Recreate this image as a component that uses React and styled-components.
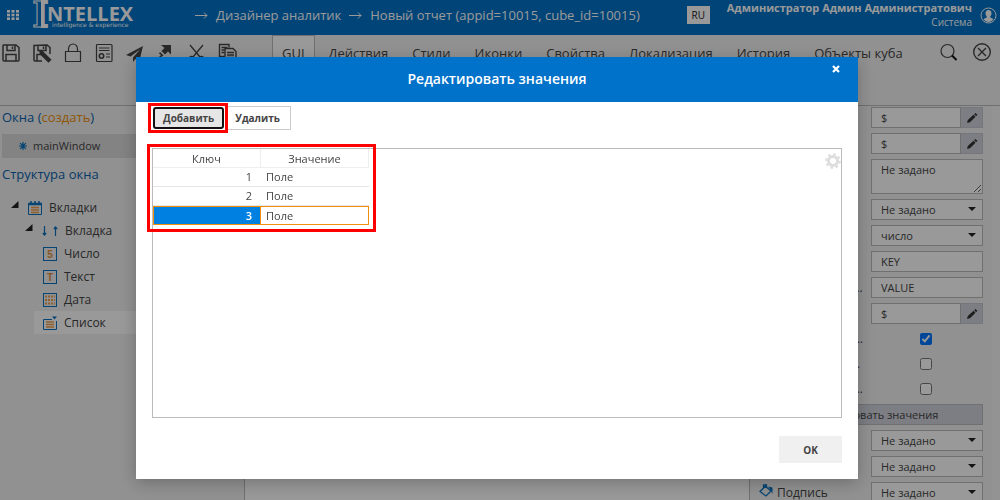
import React, { useState } from 'react';
import styled, { createGlobalStyle, css } from 'styled-components';

const GlobalStyle = createGlobalStyle`
  :root {
    --brand: #0072c9;
    --link: #0a62ad;
    --orange: #f0900a;
    --panel: #f2f2f2;
    --line: #bbb;
    --text: #444;
  }
  * {
    box-sizing: border-box;
  }
  body {
    margin: 0;
    overflow: hidden;
    background: #fff;
    color: var(--text);
    font: 12px/16px 'Open Sans', 'Noto Sans', sans-serif;
  }
  button, input, select, textarea {
    font: inherit;
    color: inherit;
    margin: 0;
  }
  a {
    color: inherit;
    text-decoration: none;
  }
`;

const Page = styled.div`
  display: flex;
  flex-direction: column;
  height: 100vh;
`;

/* ---------- header ---------- */

const HeaderBar = styled.header`
  flex: none;
  display: flex;
  align-items: center;
  height: 35px;
  padding: 0 3px 5px 7px;
  background: var(--brand);
  color: #fff;
`;

const IconButton = styled.button`
  display: flex;
  padding: 0;
  border: 0;
  background: none;
  cursor: pointer;
`;

const LogoLink = styled.a`
  display: flex;
  margin: 0 59px 0 14px;
`;

const Crumbs = styled.nav`
  flex: 1;
  display: flex;
  align-items: center;
  gap: 8px;
  font-size: 13px;
  white-space: nowrap;
`;

const Lang = styled.button`
  width: 23px;
  height: 18px;
  margin-right: 17px;
  padding: 0;
  border: 0;
  background: #fff;
  color: #222;
  font-size: 10px;
`;

const User = styled.div`
  margin-right: 8px;
  font-size: 10px;
  line-height: 14px;
  text-align: right;
  white-space: nowrap;
`;

const UserName = styled.strong`
  display: block;
  font-size: 11px;
`;

/* ---------- toolbar ---------- */

const Toolbar = styled.div`
  flex: none;
  display: flex;
  align-items: flex-start;
  height: 71px;
  padding-right: 8px;
  background: var(--panel);
  border-bottom: 1px solid var(--line);
  color: #444;
`;

const Tools = styled.div`
  flex: none;
  display: flex;
  gap: 11px;
  width: 272px;
  padding: 8px 0 0 1px;
`;

const Tabs = styled.div`
  flex: 1;
  display: flex;
  gap: 4px;
`;

const Tab = styled.button`
  height: 36px;
  padding: 0 9px;
  border: 1px solid ${(p) => (p.$active ? '#bbb' : 'transparent')};
  background: ${(p) => (p.$active ? '#fff' : 'none')};
  font-size: 13px;
  white-space: nowrap;
`;

const RightTools = styled.div`
  display: flex;
  gap: 14px;
  padding-top: 7px;
`;

/* ---------- sidebar ---------- */

const Main = styled.div`
  flex: 1;
  display: flex;
  min-height: 0;
`;

const Sidebar = styled.aside`
  flex: none;
  width: 245px;
  padding: 2px 0 0 2px;
  background: var(--panel);
  border-right: 1px solid var(--line);
`;

const SideTitle = styled.h2`
  margin: 0;
  color: var(--link);
  font-size: 13px;
  font-weight: 400;
  line-height: 18px;
`;

const Create = styled.a`
  color: var(--orange);
`;

const WindowItem = styled.div`
  display: flex;
  align-items: center;
  gap: 6px;
  height: 24px;
  margin: 8px 0 7px;
  padding-left: 17px;
  background: #dadada;
  font-size: 11px;
`;

const Tree = styled.ul`
  margin: 13px 0 0;
  padding: 0;
  list-style: none;
`;

const Node = styled.li`
  display: flex;
  align-items: center;
  gap: 7px;
  height: 23px;
  margin-left: ${(p) => p.$indent}px;
  padding-left: 9px;
  background: ${(p) => (p.$selected ? '#fff' : 'none')};
`;

const Canvas = styled.main`
  flex: 1;
  background: #fff;
`;

/* ---------- properties ---------- */

const Props = styled.aside`
  flex: none;
  width: 251px;
  padding-right: 8px;
  background: #f6f6f6;
  border-left: 1px solid var(--line);
`;

const PropList = styled.div`
  display: flex;
  flex-direction: column;
  gap: 5px;
  height: 100%;
  padding: 1px 9px 0;
  overflow: hidden;
  background: var(--panel);
`;

const PropRow = styled.div`
  flex: none;
  display: grid;
  grid-template-columns: 14px minmax(0, 1fr) 112px;
  column-gap: 4px;
  align-items: center;
  height: ${(p) => p.$height || 21}px;
`;

const PropLabel = styled.label`
  overflow: hidden;
  text-overflow: ellipsis;
  white-space: nowrap;
`;

const field = css`
  width: 100%;
  height: 100%;
  padding: 0 9px;
  border: 1px solid var(--line);
  border-radius: 0;
  background: #fff;
  font-size: 11px;
`;

const Input = styled.input`
  ${field}
`;

const Area = styled.textarea`
  ${field}
  display: block;
  padding-top: 2px;
`;

const SelectBox = styled.div`
  position: relative;
  height: 100%;
  &::after {
    content: '';
    position: absolute;
    top: 8px;
    right: 7px;
    border: 4px solid transparent;
    border-top-color: #222;
    border-bottom: 0;
    pointer-events: none;
  }
`;

const Select = styled.select`
  ${field}
  appearance: none;
`;

const Combo = styled.div`
  display: grid;
  grid-template-columns: 1fr 22px;
  height: 100%;
`;

const EditButton = styled.button`
  display: flex;
  align-items: center;
  justify-content: center;
  padding: 0;
  border: 1px solid #c4c6d0;
  border-left: 0;
  background: #d0d2dc;
`;

const Check = styled.input`
  width: 12px;
  height: 12px;
  justify-self: center;
  && {
    margin-right: 2px;
  }
`;

const WideButton = styled.button`
  flex: none;
  height: 21px;
  border: 1px solid var(--line);
  background: #d0d2dc;
  font-size: 11px;
`;

/* ---------- dialog ---------- */

const Backdrop = styled.div`
  position: fixed;
  inset: 0;
  padding: 57px 142px 0 136px;
  background: rgba(0, 0, 0, 0.4);
`;

const Dialog = styled.section`
  background: #fff;
  box-shadow: 0 4px 16px rgba(0, 0, 0, 0.25);
`;

const DialogHead = styled.div`
  display: grid;
  grid-template-columns: 40px 1fr 40px;
  height: 45px;
  background: var(--brand);
  color: #fff;
`;

const DialogTitle = styled.h1`
  grid-column: 2;
  margin: 0;
  font-size: 14px;
  font-weight: 600;
  line-height: 44px;
  text-align: center;
`;

const Close = styled(IconButton)`
  align-self: start;
  justify-self: center;
  padding: 8px 4px 8px 0;
`;

const DialogBody = styled.div`
  padding: 4px 16px 16px;
`;

const Actions = styled.div`
  display: flex;
  height: 24px;
`;

const Highlight = styled.div`
  position: relative;
  display: flex;
  &::before {
    content: '';
    position: absolute;
    inset: ${(p) => p.$inset};
    border: 3px solid #f00;
    pointer-events: none;
  }
`;

const ActionButton = styled.button`
  padding: 0 10px;
  border: 1px solid #ccc;
  border-left: 0;
  background: #fff;
  font-size: 10px;
  font-weight: 700;
  ${(p) =>
    p.$focused &&
    css`
      padding: 0 8px;
      margin: 1px;
      border: 2px solid #111;
      border-radius: 3px;
      background: #e6e6e6;
    `}
`;

const GridBox = styled.div`
  display: flex;
  justify-content: space-between;
  align-items: flex-start;
  height: 270px;
  margin: 18px 0;
  border: 1px solid var(--line);
`;

const Table = styled.table`
  width: 216px;
  table-layout: fixed;
  border-collapse: separate;
  border-spacing: 0;
  font-size: 11px;
  th {
    height: 19px;
    padding: 2px 0 0;
    border-right: 1px solid #eee;
    border-bottom: 1px solid #eee;
    font-weight: 400;
  }
  td {
    height: 19px;
    padding: 0 5px;
    border-bottom: 1px solid #e6e6e6;
    line-height: 16px;
  }
  td:first-child {
    padding-right: 9px;
    text-align: right;
  }
`;

const Row = styled.tr`
  ${(p) =>
    p.$selected &&
    css`
      && td {
        padding-left: 5px;
        border: 1px solid var(--orange);
        border-left: 0;
      }
      && td:first-child {
        padding-right: 8px;
        border-left: 1px solid var(--orange);
        background: #0080e0;
        color: #fff;
        font-weight: 600;
      }
    `}
`;

const Footer = styled.div`
  display: flex;
  justify-content: flex-end;
`;

const OkButton = styled.button`
  width: 63px;
  height: 27px;
  padding: 0;
  border: 0;
  background: #f0f0f0;
  font-size: 10px;
  font-weight: 700;
`;

/* ---------- drawings ---------- */

const Svg = ({ w = 20, h = 20, children, ...rest }) => (
  <svg width={w} height={h} viewBox={`0 0 ${w} ${h}`} fill="none" stroke="currentColor" strokeWidth="1.5" aria-hidden="true" {...rest}>
    {children}
  </svg>
);

const Logo = () => (
  <svg width="103" height="30" viewBox="0 0 103 30" fill="#fff" role="img" aria-label="Intellex">
    <clipPath id="solid">
      <rect x="8" y="0" width="12" height="30" />
    </clipPath>
    <text x="-1" y="27" fontFamily="DejaVu Serif" fontWeight="700" fontSize="35" fill="none" stroke="#fff">I</text>
    <text x="-1" y="27" fontFamily="DejaVu Serif" fontWeight="700" fontSize="35" stroke="#fff" strokeWidth="2" clipPath="url(#solid)">I</text>
    <text x="14" y="21" fontFamily="Open Sans" fontWeight="700" fontSize="20">NTELLEX</text>
    <text x="19" y="27" fontFamily="DejaVu Sans" fontSize="6">intelligence &amp; experience</text>
  </svg>
);

const Arrow = () => (
  <Svg w={13} h={8} strokeWidth="1">
    <path d="M0 4.500h12M9 1.500l3 3-3 3" />
  </Svg>
);

const AppsIcon = () => (
  <Svg w={12} h={10} fill="#fff" stroke="none">
    {[0, 4.5, 9].map((x) => [0, 3.7, 7.4].map((y) => <rect key={`${x}-${y}`} x={x} y={y} width="3" height="2.600" />))}
  </Svg>
);

const AvatarIcon = () => (
  <Svg w={17} h={17} strokeWidth="1" stroke="#fff">
    <circle cx="8.5" cy="8.5" r="7.5" />
    <path d="M8.5 3c2 0 3 1.400 3 3.400 0 1.300-.6 2.200-1.200 2.900v1.200l3.200 1.500c-1.200 2-3 3-5 3s-3.800-1-5-3l3.200-1.500V9.300C6.100 8.600 5.500 7.700 5.500 6.400 5.500 4.400 6.500 3 8.500 3z" fill="#fff" stroke="none" />
  </Svg>
);

const floppy = 'M2.500 2H15l3 2.500V17a1 1 0 0 1-1 1H3a1 1 0 0 1-1-1V2.500zM6 2v5.500h8V2M11.500 3.500v2.500M5 18v-6.500h10V18';

const SaveIcon = () => (
  <Svg>
    <path d={floppy} />
  </Svg>
);

const SaveEditIcon = () => (
  <Svg>
    <path d="M10 18H3a1 1 0 0 1-1-1V2.500L15 2l3 2.500V11M6 2v5.500h8V2M11.500 3.500v2.500M5 18v-6.500h4" />
    <path d="M8 8l2.500.8 8 8-2 2-8-8z" fill="currentColor" />
  </Svg>
);

const LockIcon = () => (
  <Svg strokeWidth="1.200">
    <path d="M2.500 8.500h15v10h-15zM5.500 8.500V6a4.500 5 0 0 1 9 0v2.500" />
  </Svg>
);

const FormIcon = () => (
  <Svg strokeWidth="1.200">
    <rect x="2.500" y="1.500" width="15.500" height="17" rx="1" />
    <path d="M5 5h10.500M5 7.500h10.500M12 11h4M12 14h4" />
    <circle cx="7.500" cy="13" r="2.200" strokeWidth="1.600" />
  </Svg>
);

const PlaneIcon = () => (
  <Svg stroke="none" fill="currentColor">
    <path d="M18 3L1 12l4.500 1.500L15 6.500 8 14.500V19l2.500-3 4 1.500z" />
  </Svg>
);

const JumpIcon = () => (
  <Svg stroke="none" fill="currentColor">
    <path d="M5 2h10v9.500l-3-3-3 3L5.500 8l3-3z M4 9l3.500 3.500L5 14H3l2-2-2-1.500z" />
  </Svg>
);

const CutIcon = () => (
  <Svg strokeWidth="1.300">
    <path d="M3 2l10 12M16 2L6 14" />
    <circle cx="4.500" cy="15.500" r="2" />
    <circle cx="14.500" cy="15.500" r="2" />
  </Svg>
);

const CopyIcon = () => (
  <Svg strokeWidth="1.400">
    <path d="M6.500 13.500H1.500V1.500h9.500v3M3.500 4.500h6M3.500 7h3M3.500 9.500h3" />
    <path d="M7 5.500h8l3 3V19H7z" />
    <path d="M9 9.500h7M9 12h7M9 14.500h7" />
  </Svg>
);

const SearchIcon = () => (
  <Svg strokeWidth="1.200">
    <circle cx="9.500" cy="9" r="6.500" />
    <path d="M14 13.500l4.500 4.500" stroke="#111" strokeWidth="2" />
  </Svg>
);

const CloseCircleIcon = () => (
  <Svg strokeWidth="1.400">
    <circle cx="10" cy="10" r="8.300" />
    <path d="M6 6l8 8M14 6l-8 8" />
  </Svg>
);

const PencilIcon = () => (
  <Svg w={12} h={12} stroke="none" fill="#333">
    <path d="M1 11l.8-3L7.500 2.800l2 2L4 10.200zM8.200 2.200l1.200-1.200 2 1.800-1.200 1.400z" />
  </Svg>
);

const ExpanderIcon = styled.svg`
  margin: 0 2px 6px 0;
`;

const Expander = () => (
  <ExpanderIcon width="8" height="8" viewBox="0 0 8 8" fill="#222" aria-hidden="true">
    <path d="M7.500 0v7H0z" />
  </ExpanderIcon>
);

const TabsIcon = () => (
  <Svg w={14} h={14} stroke="#0a72c0" strokeWidth="1">
    <path d="M.5 2v11.500h13V2" />
    <path d="M0 3h14" strokeWidth="2.500" />
    <path d="M3 0v3M7 0v3M11 0v3" strokeWidth="1.500" />
    <path d="M3 6.500h8M3 9h8M3 11.500h8" stroke="#f0a050" strokeWidth="1.500" />
  </Svg>
);

const UpDownIcon = () => (
  <Svg w={16} h={10} stroke="#0a72c0" strokeWidth="1.200">
    <path d="M2.500 0v9M.8 7l1.700 2 1.700-2M13.500 10V1M11.800 3l1.700-2 1.700 2" />
  </Svg>
);

const LetterIcon = ({ char }) => (
  <Svg w={14} h={14} stroke="#0a72c0" strokeWidth="1">
    <rect x=".5" y=".5" width="13" height="13" />
    <text x="7" y="11" textAnchor="middle" fontFamily="Liberation Sans" fontWeight="700" fontSize="10" fill="#e09040" stroke="none">{char}</text>
  </Svg>
);

const DateIcon = () => (
  <Svg w={14} h={14} stroke="#0a72c0" strokeWidth="1">
    <rect x=".5" y=".5" width="13" height="13" />
    <path d="M2 3.500h10M2 7h10M2 10.500h10" stroke="#f0a050" strokeWidth="2" strokeDasharray="2 1" />
  </Svg>
);

const ListIcon = () => (
  <Svg w={14} h={14} stroke="#0a72c0" strokeWidth="1">
    <path d="M9 3.500H.5v10h13V5" />
    <path d="M9 .5h5l-2.500 3z" fill="#0a72c0" stroke="none" />
    <path d="M3 6h8M3 8.500h8M3 11h8" stroke="#f0a050" strokeWidth="1.500" />
  </Svg>
);

const PaintIcon = () => (
  <Svg w={14} h={13} stroke="#0a72c0" strokeWidth="1.300">
    <path d="M6 2l6 5-5 5-6-4.500L6.500 2M4.500 4.500V1h3v2" />
    <path d="M9 2.500l4.500 1V10L12 7z" fill="#0a72c0" stroke="none" />
  </Svg>
);

const GearIcon = () => (
  <Svg w={16} h={24} stroke="#ddd">
    <circle cx="8" cy="12" r="4.500" strokeWidth="3" />
    <circle cx="8" cy="12" r="6.800" strokeWidth="2" strokeDasharray="2.600 2.740" />
  </Svg>
);

const CrossIcon = () => (
  <Svg w={8} h={8} stroke="#fff" strokeWidth="2.200">
    <path d="M1 1l6 6M7 1L1 7" />
  </Svg>
);

/* ---------- data ---------- */

const TOOLS = [
  ['Сохранить', SaveIcon],
  ['Сохранить как', SaveEditIcon],
  ['Права', LockIcon],
  ['Форма', FormIcon],
  ['Отправить', PlaneIcon],
  ['Перейти', JumpIcon],
  ['Вырезать', CutIcon],
  ['Копировать', CopyIcon],
];

const TABS = ['GUI', 'Действия', 'Стили', 'Иконки', 'Свойства', 'Локализация', 'История', 'Объекты куба'];

const NODES = [
  { label: 'Число', icon: <LetterIcon char="5" /> },
  { label: 'Текст', icon: <LetterIcon char="T" /> },
  { label: 'Дата', icon: <DateIcon /> },
  { label: 'Список', icon: <ListIcon />, selected: true },
];

const FIELDS = [
  { id: 'title', label: 'Заголовок', type: 'combo' },
  { id: 'hint', label: 'Подсказка', type: 'combo' },
  { id: 'note', label: 'Описание', type: 'area' },
  { id: 'style', label: 'Стиль', type: 'select', value: 'Не задано' },
  { id: 'kind', label: 'Тип ключа', type: 'select', value: 'число' },
  { id: 'key', label: 'Поле ключа', type: 'text', value: 'KEY' },
  { id: 'value', label: 'Поле для значения', type: 'text', value: 'VALUE' },
  { id: 'default', label: 'Значение', type: 'combo' },
  { id: 'empty', label: 'Обязательное поле', type: 'check', checked: true },
  { id: 'multi', label: 'Множественный', type: 'check' },
  { id: 'search', label: 'Поиск по значению', type: 'check' },
];

const STYLES = [
  { id: 'frame', label: 'Рамка', type: 'select', value: 'Не задано' },
  { id: 'back', label: 'Фон', type: 'select', value: 'Не задано' },
  { id: 'caption', label: 'Подпись', type: 'select', value: 'Не задано', icon: <PaintIcon /> },
];

const Control = ({ id, type, value, checked }) => {
  switch (type) {
    case 'combo':
      return (
        <Combo>
          <Input id={id} defaultValue="$" />
          <EditButton type="button" aria-label="Изменить">
            <PencilIcon />
          </EditButton>
        </Combo>
      );
    case 'area':
      return <Area id={id} defaultValue="Не задано" />;
    case 'select':
      return (
        <SelectBox>
          <Select id={id}>
            <option>{value}</option>
          </Select>
        </SelectBox>
      );
    case 'check':
      return <Check id={id} type="checkbox" defaultChecked={checked} />;
    default:
      return <Input id={id} defaultValue={value} />;
  }
};

const HEIGHTS = { area: 35, check: 20 };

const PropertyRow = ({ item }) => (
  <PropRow $height={HEIGHTS[item.type]}>
    <span>{item.icon}</span>
    <PropLabel htmlFor={item.id}>{item.label}</PropLabel>
    <Control {...item} />
  </PropRow>
);

const Header = () => (
  <HeaderBar>
    <IconButton aria-label="Приложения">
      <AppsIcon />
    </IconButton>
    <LogoLink href="#">
      <Logo />
    </LogoLink>
    <Crumbs>
      <Arrow />
      <a href="#">Дизайнер аналитик</a>
      <Arrow />
      <a href="#">Новый отчет (appid=10015, cube_id=10015)</a>
    </Crumbs>
    <Lang>RU</Lang>
    <User>
      <UserName>Администратор Админ Администратович</UserName>
      Система
    </User>
    <AvatarIcon />
  </HeaderBar>
);

const ValuesDialog = ({ onClose }) => {
  const [rows, setRows] = useState([1, 2, 3]);
  const [selected, setSelected] = useState(3);

  const addRow = () => {
    const key = Math.max(0, ...rows) + 1;
    setRows([...rows, key]);
    setSelected(key);
  };

  return (
    <Backdrop>
      <Dialog role="dialog" aria-labelledby="dialog-title">
        <DialogHead>
          <DialogTitle id="dialog-title">Редактировать значения</DialogTitle>
          <Close aria-label="Закрыть" onClick={onClose}>
            <CrossIcon />
          </Close>
        </DialogHead>
        <DialogBody>
          <Actions>
            <Highlight $inset="-3px -3px -3px -4px">
              <ActionButton $focused onClick={addRow}>Добавить</ActionButton>
            </Highlight>
            <ActionButton onClick={() => setRows(rows.filter((r) => r !== selected))}>Удалить</ActionButton>
          </Actions>
          <GridBox>
            <Highlight $inset="-5px -7px -7px -6px">
              <Table>
                <thead>
                  <tr>
                    <th>Ключ</th>
                    <th>Значение</th>
                  </tr>
                </thead>
                <tbody>
                  {rows.map((key) => (
                    <Row key={key} $selected={key === selected} onClick={() => setSelected(key)}>
                      <td>{key}</td>
                      <td>Поле</td>
                    </Row>
                  ))}
                </tbody>
              </Table>
            </Highlight>
            <IconButton aria-label="Настройки">
              <GearIcon />
            </IconButton>
          </GridBox>
          <Footer>
            <OkButton onClick={onClose}>OK</OkButton>
          </Footer>
        </DialogBody>
      </Dialog>
    </Backdrop>
  );
};

const App = () => {
  const [open, setOpen] = useState(true);

  return (
    <>
      <GlobalStyle />
      <Page>
        <Header />
        <Toolbar>
          <Tools>
            {TOOLS.map(([name, Icon]) => (
              <IconButton key={name} aria-label={name}>
                <Icon />
              </IconButton>
            ))}
          </Tools>
          <Tabs>
            {TABS.map((tab) => (
              <Tab key={tab} $active={tab === 'GUI'}>{tab}</Tab>
            ))}
          </Tabs>
          <RightTools>
            <IconButton aria-label="Поиск">
              <SearchIcon />
            </IconButton>
            <IconButton aria-label="Закрыть отчет">
              <CloseCircleIcon />
            </IconButton>
          </RightTools>
        </Toolbar>
        <Main>
          <Sidebar>
            <SideTitle>
              Окна (<Create href="#">создать</Create>)
            </SideTitle>
            <WindowItem>
              <Svg w={8} h={8} stroke="#0a72c0">
                <path d="M4 0v8M0 4h8M1.200 1.200l5.600 5.600M6.800 1.200L1.200 6.800" strokeWidth="1.200" />
              </Svg>
              mainWindow
            </WindowItem>
            <SideTitle>Структура окна</SideTitle>
            <Tree>
              <Node $indent={0}>
                <Expander />
                <TabsIcon />
                Вкладки
              </Node>
              <Node $indent={14}>
                <Expander />
                <UpDownIcon />
                Вкладка
              </Node>
              {NODES.map((node) => (
                <Node key={node.label} $indent={32} $selected={node.selected}>
                  {node.icon}
                  {node.label}
                </Node>
              ))}
            </Tree>
          </Sidebar>
          <Canvas />
          <Props>
            <PropList>
              {FIELDS.map((item) => (
                <PropertyRow key={item.id} item={item} />
              ))}
              <WideButton onClick={() => setOpen(true)}>Редактировать значения</WideButton>
              {STYLES.map((item) => (
                <PropertyRow key={item.id} item={item} />
              ))}
            </PropList>
          </Props>
        </Main>
      </Page>
      {open && <ValuesDialog onClose={() => setOpen(false)} />}
    </>
  );
};

export default App;
